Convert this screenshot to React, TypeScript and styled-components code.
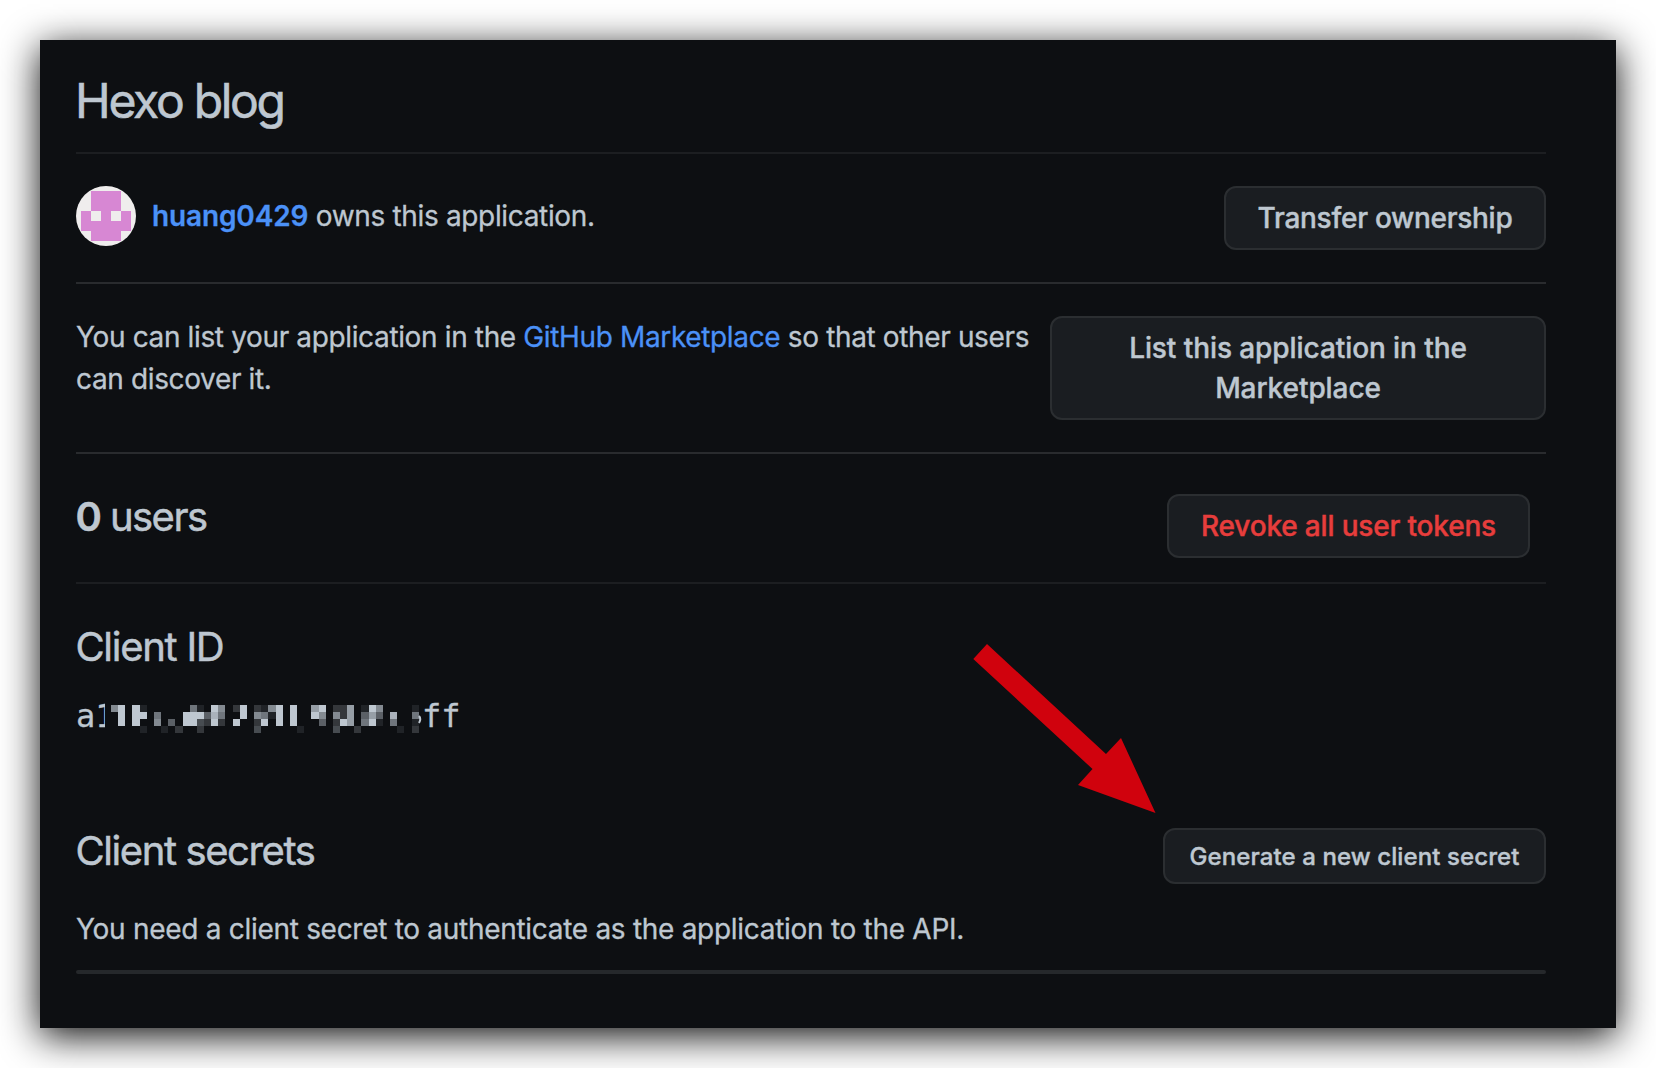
import React from 'react';
import styled, { createGlobalStyle } from 'styled-components';

const color = {
  canvas: '#0d0f12',
  text: '#bec7d0',
  link: '#4b91f7',
  danger: '#e73d3c',
  button: '#1a1d21',
  buttonBorder: '#2b2e31',
  line: '#292b2e',
  lineMuted: '#1c1e21',
  arrow: '#d0020d',
};

const GlobalStyle = createGlobalStyle`
  *, *::before, *::after { box-sizing: border-box; }
  body {
    margin: 0;
    background: #fff;
    font-family: Inter, "Liberation Sans", sans-serif;
    font-size: 28px;
    line-height: 42px;
    letter-spacing: -0.29px;
    color: ${color.text};
    -webkit-text-stroke-width: 0.3px;
  }
  h1, h2, p { margin: 0; font-weight: 400; }
`;

const Page = styled.div`
  display: flex;
  height: 1068px;
  padding: 40px;
`;

const Panel = styled.main`
  position: relative;
  flex: 1;
  display: flex;
  flex-direction: column;
  padding: 25px 70px 0 36px;
  background: ${color.canvas};
  box-shadow: 0 8px 36px rgba(0, 0, 0, 0.96);
`;

const TitleBar = styled.header`
  padding-bottom: 15px;
  border-bottom: 2px solid ${color.lineMuted};
`;

const Title = styled.h1`
  margin-left: -1px;
  font-size: 48px;
  line-height: 72px;
  letter-spacing: -2.27px;
  -webkit-text-stroke-width: 0.6px;
`;

const Heading = styled.h2<{ $tracking?: number }>`
  margin: 1px 0 -1px -0.6px;
  font-size: 40px;
  line-height: 60px;
  letter-spacing: ${(p) => p.$tracking ?? -1.4}px;
  -webkit-text-stroke-width: 0.5px;

  strong { font-weight: 600; }
`;

const Row = styled.section<{ $muted?: boolean }>`
  display: flex;
  justify-content: space-between;
  align-items: flex-start;
  gap: 16px;
  padding: 32px 0;
  border-bottom: 2px solid ${(p) => (p.$muted ? color.lineMuted : color.line)};
`;

const UsersRow = styled(Row)`
  padding: 32px 16px 24px 0;
`;

const Owner = styled.div`
  display: flex;
  align-items: center;
  gap: 16px;
  height: 60px;
`;

const Avatar = styled.svg`
  display: block;
  width: 60px;
  height: 60px;
  border-radius: 50%;
`;

const Copy = styled.p<{ $tracking?: number }>`
  letter-spacing: ${(p) => p.$tracking ?? -0.29}px;
`;

const Link = styled.a<{ $strong?: boolean }>`
  color: ${color.link};
  font-weight: ${(p) => (p.$strong ? 600 : 400)};
  letter-spacing: ${(p) => (p.$strong ? '-0.14px' : 'inherit')};
  text-decoration: none;
`;

const Button = styled.button<{ $small?: boolean; $danger?: boolean; $width: number; $drop?: number; $tracking?: number }>`
  flex: none;
  width: ${(p) => p.$width}px;
  margin: ${(p) => p.$drop ?? 0}px 0 0;
  padding: ${(p) => (p.$small ? '7px 0 5px' : '10px 28px')};
  border: 2px solid ${color.buttonBorder};
  border-radius: 12px;
  background: ${color.button};
  color: ${(p) => (p.$danger ? color.danger : color.text)};
  font-family: inherit;
  font-size: ${(p) => (p.$small ? 24 : 28)}px;
  font-weight: 500;
  line-height: 40px;
  letter-spacing: ${(p) => p.$tracking ?? -0.17}px;
  -webkit-text-stroke-width: 0.4px;
`;

const ClientId = styled.section`
  padding: 32px 0 80px;
`;

const Code = styled.div`
  display: flex;
  align-items: center;
  height: 48px;
  margin-top: 16px;
  font-family: "DejaVu Sans Mono", monospace;
  font-size: 32px;
  line-height: 48px;
  letter-spacing: 0;
`;

const CodeStart = styled.span`
  flex: none;
  width: 29px;
  margin-right: 6px;
  overflow: hidden;
  white-space: nowrap;
`;

const Mosaic = styled.svg`
  flex: none;
  display: block;
  margin-top: 6px;
`;

const SecretsHead = styled.section`
  display: flex;
  justify-content: space-between;
  align-items: flex-start;
`;

const Note = styled(Copy)`
  margin-top: 24px;
`;

const EndBar = styled.div`
  height: 4px;
  margin-top: 20px;
  border-radius: 2px;
  background: #25282b;
`;

const Arrow = styled.svg`
  position: absolute;
  left: 932px;
  top: 602px;
  pointer-events: none;
`;

/* Brightness of each block of the hidden part of the ID, 0 (background) to 9 (text). */
const blocks = [
  [6,9,0,9,1,0,0,0,0,0,0,5,1,0,9,6,0,2,9,0,2,1,6,9,0,9,0,0,7,9,0,2,2,7,0,1,9,6,0,0,0,0,1],
  [0,9,0,9,9,0,5,0,0,0,9,9,9,4,8,5,0,0,9,0,6,5,1,9,0,9,0,0,9,6,0,6,2,7,0,4,7,4,0,8,0,0,5],
  [0,9,0,9,0,0,6,0,4,0,9,9,3,2,9,2,0,9,0,0,2,9,0,9,0,9,0,0,0,4,0,2,9,7,0,5,9,1,0,5,0,0,1],
  [0,0,0,0,1,0,0,1,0,2,0,0,2,0,0,0,0,0,0,0,3,0,0,0,0,0,1,0,0,0,0,3,0,0,2,0,0,0,0,0,1,0,2],
];

function HiddenDigits() {
  const w = 7.156;
  return (
    <Mosaic width="311" height="28" viewBox="0 0 311 28" shapeRendering="crispEdges">
      {blocks.map((row, y) =>
        row.map((v, x) =>
          v ? (
            <rect
              key={`${x}-${y}`}
              x={Math.round(x * w)}
              y={y * 7}
              width={Math.round((x + 1) * w) - Math.round(x * w)}
              height={7}
              fill={color.text}
              fillOpacity={v / 9}
            />
          ) : null,
        ),
      )}
      <path d="M308 11 Q310.5 14 308 18" fill="none" stroke={color.text} strokeWidth="2" shapeRendering="auto" />
    </Mosaic>
  );
}

export default function App() {
  return (
    <>
      <GlobalStyle />
      <Page>
        <Panel>
          <TitleBar>
            <Title>Hexo blog</Title>
          </TitleBar>

          <Row>
            <Owner>
              <Avatar viewBox="0 0 60 60" shapeRendering="crispEdges">
                <rect width="60" height="60" fill="#efeded" />
                <path d="M15 5H45V25H55V45H45V55H15V45H5V25H15Z" fill="#d787d3" />
                <path d="M15 25H25V35H15ZM35 25H45V35H35Z" fill="#efeded" />
              </Avatar>
              <Copy $tracking={-0.34}>
                <Link $strong>huang0429</Link> owns this application.
              </Copy>
            </Owner>
            <Button $width={322} $tracking={-0.28}>
              Transfer ownership
            </Button>
          </Row>

          <Row>
            <Copy $tracking={-0.36}>
              You can list your application in the <Link>GitHub Marketplace</Link> so that other users can discover it.
            </Copy>
            <Button $width={496} $tracking={-0.08}>
              List this application in the
              <br />
              Marketplace
            </Button>
          </Row>

          <UsersRow $muted>
            <Heading $tracking={-1.55}>
              <strong>0</strong> users
            </Heading>
            <Button $danger $width={363} $drop={8}>
              Revoke all user tokens
            </Button>
          </UsersRow>

          <ClientId>
            <Heading $tracking={-1.27}>Client ID</Heading>
            <Code>
              <CodeStart>a1</CodeStart>
              <HiddenDigits />
              <span>ff</span>
            </Code>
          </ClientId>

          <SecretsHead>
            <Heading>Client secrets</Heading>
            <Button $small $width={383} $drop={8} $tracking={0.1}>
              Generate a new client secret
            </Button>
          </SecretsHead>
          <Note>You need a client secret to authenticate as the application to the API.</Note>
          <EndBar />

          <Arrow width="186" height="174" viewBox="0 0 186 174">
            <path d="M1.3 17 15 2 134 112 149 96 183.5 171 106 143 120.5 127Z" fill={color.arrow} />
          </Arrow>
        </Panel>
      </Page>
    </>
  );
}
